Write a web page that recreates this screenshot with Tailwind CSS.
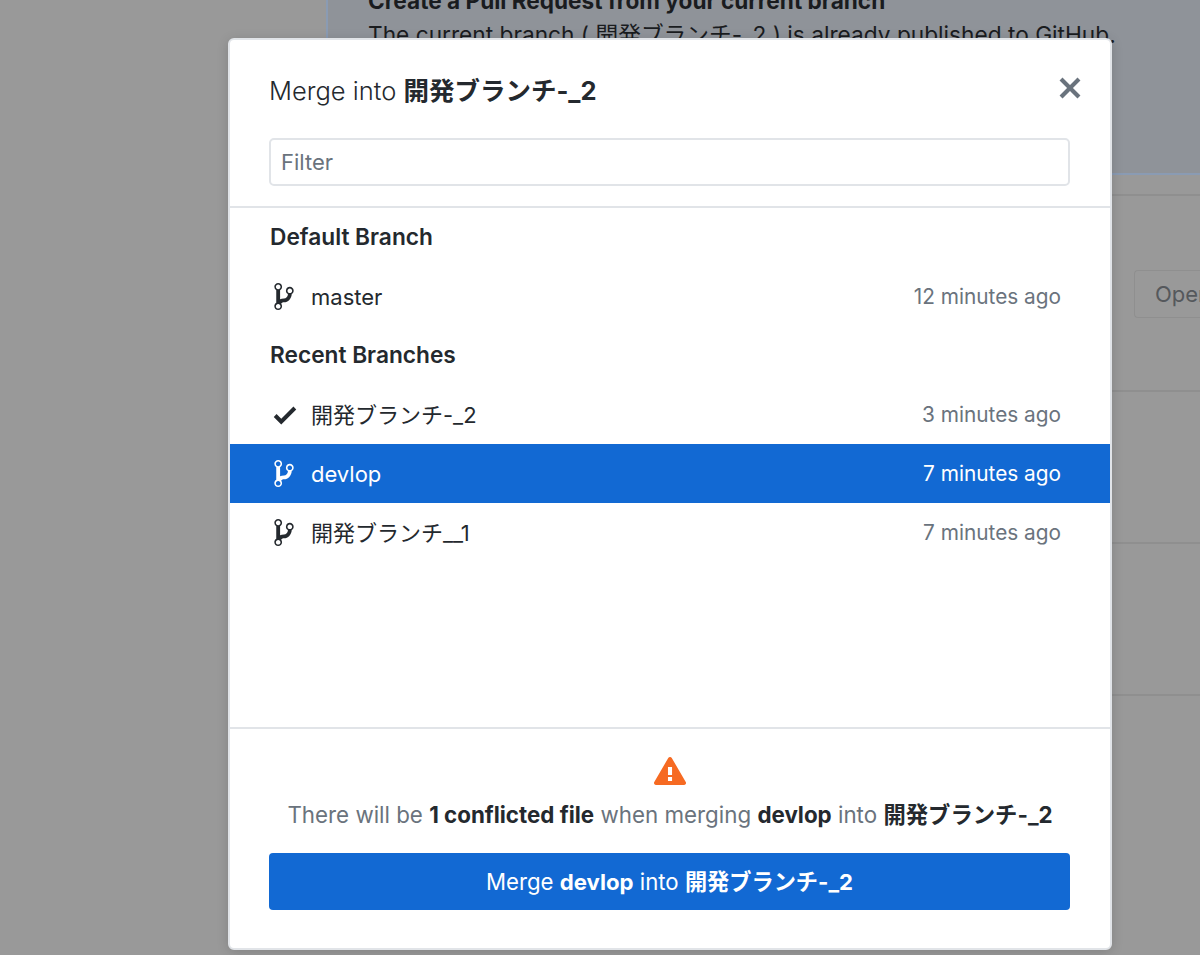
<!DOCTYPE html>
<html lang="en">
<head>
    <meta charset="utf-8">
    <title>Merge into branch</title>
    <script src="https://cdn.jsdelivr.net/npm/@tailwindcss/browser@4"></script>
</head>
<body class="h-[955px] overflow-hidden bg-[#999999] text-[#24292e] font-['Inter','Noto_Sans_CJK_JP',sans-serif]">
    <!-- page behind the dialog -->
    <main class="ml-[326px] h-full">
        <section class="h-[175px] pl-[40px] bg-[#8f9399] border-l-2 border-b-2 border-[#8a9bb3] overflow-hidden text-[22.7px] leading-[34px] text-[#1a1c1f]">
            <p class="mt-[-16px] text-[22.6px] font-bold whitespace-nowrap">Create a Pull Request from your current branch</p>
            <p class="whitespace-nowrap">The current branch ( 開発ブランチ-_2 ) is already published to GitHub.</p>
        </section>
        <div class="h-[196px] mt-[19px] border-t-2 border-[#8f8f8f] flex items-center justify-end">
            <div class="w-[66px] h-[48px] mt-[2px] pl-[20px] border border-r-0 border-[#8f8f8f] rounded-l-[4px] text-[22px] leading-[46px] text-[#55585c] overflow-hidden">Open</div>
        </div>
        <div class="h-[152px] border-t-2 border-[#8f8f8f]"></div>
        <div class="h-[152px] border-t-2 border-[#8f8f8f]"></div>
        <div class="border-t-2 border-[#8f8f8f]"></div>
    </main>

    <!-- dialog -->
    <div class="absolute left-[228px] top-[38px] w-[884px] h-[912px] flex flex-col bg-white rounded-[6px] border-2 border-[#e1e4e8] shadow-[0_2px_12px_rgba(0,0,0,0.15)]">
        <header class="h-[168px] px-[39px] border-b-2 border-[#e1e4e8]">
            <div class="h-[98px] flex items-start justify-between">
                <h1 class="mt-[33px] text-[25.5px] leading-[36px] font-light">Merge into <strong class="font-bold">開発ブランチ-_2</strong></h1>
                <svg class="mt-[32px] mr-[-11px] w-[24px] h-[32px] fill-[#6a737d]" viewBox="0 0 12 16"><path d="M7.48 8l3.75 3.75-1.48 1.48L6 9.48l-3.75 3.75-1.48-1.48L4.52 8 .77 4.25l1.48-1.48L6 6.52l3.75-3.75 1.48 1.48L7.48 8z"/></svg>
            </div>
            <input class="block w-[801px] h-[48px] px-[10px] border-2 border-[#e1e4e8] rounded-[5px] text-[22px] placeholder:text-[#6a737d] outline-none" placeholder="Filter">
        </header>

        <div class="flex-1 text-[22px]">
            <h2 class="h-[59px] px-[40px] flex items-center text-[22.7px] font-semibold">Default Branch</h2>
            <div class="h-[59px] px-[40px] flex items-center justify-between">
                <span class="flex items-center">
                    <svg class="ml-[4px] w-[20px] h-[31px] fill-current" viewBox="0 0 10 16"><path d="M10 5c0-1.11-.89-2-2-2a1.993 1.993 0 0 0-1 3.72v.3c-.02.52-.23.98-.63 1.38-.4.4-.86.61-1.38.63-.83.02-1.48.16-2 .45V4.72a1.993 1.993 0 0 0-1-3.72C.88 1 0 1.89 0 3a2 2 0 0 0 1 1.72v6.56c-.59.35-1 .99-1 1.72 0 1.11.89 2 2 2 1.11 0 2-.89 2-2 0-.53-.2-1-.53-1.36.09-.06.48-.41.59-.47.25-.11.56-.17.94-.17 1.05-.05 1.95-.45 2.75-1.25S8.95 7.77 9 6.73h-.02C9.59 6.37 10 5.73 10 5zM2 1.8c.66 0 1.2.55 1.2 1.2 0 .65-.55 1.2-1.2 1.2C1.35 4.2.8 3.65.8 3c0-.65.55-1.2 1.2-1.2zm0 12.41c-.66 0-1.2-.55-1.2-1.2 0-.65.55-1.2 1.2-1.2.65 0 1.2.55 1.2 1.2 0 .65-.55 1.2-1.2 1.2zm6-8c-.66 0-1.2-.55-1.2-1.2 0-.65.55-1.2 1.2-1.2.65 0 1.2.55 1.2 1.2 0 .65-.55 1.2-1.2 1.2z"/></svg>
                    <span class="ml-[17px] mt-[1px]">master</span>
                </span>
                <span class="mr-[9px] mt-[1px] text-[20.8px] text-[#6a737d]">12 minutes ago</span>
            </div>
            <h2 class="h-[59px] px-[40px] flex items-center text-[22.7px] font-semibold">Recent Branches</h2>
            <div class="h-[59px] px-[40px] flex items-center justify-between">
                <span class="flex items-center">
                    <svg class="ml-[3px] w-[24px] h-[30px] fill-current" viewBox="0 0 12 16"><path d="M12 5l-8 8-4-4 1.5-1.5L4 10l6.5-6.5L12 5z"/></svg>
                    <span class="ml-[14px] mt-[1px]">開発ブランチ-_2</span>
                </span>
                <span class="mr-[9px] mt-[1px] text-[20.8px] text-[#6a737d]">3 minutes ago</span>
            </div>
            <div class="h-[59px] px-[40px] flex items-center justify-between bg-[#1269d3] text-white">
                <span class="flex items-center">
                    <svg class="ml-[4px] w-[20px] h-[31px] fill-current" viewBox="0 0 10 16"><path d="M10 5c0-1.11-.89-2-2-2a1.993 1.993 0 0 0-1 3.72v.3c-.02.52-.23.98-.63 1.38-.4.4-.86.61-1.38.63-.83.02-1.48.16-2 .45V4.72a1.993 1.993 0 0 0-1-3.72C.88 1 0 1.89 0 3a2 2 0 0 0 1 1.72v6.56c-.59.35-1 .99-1 1.72 0 1.11.89 2 2 2 1.11 0 2-.89 2-2 0-.53-.2-1-.53-1.36.09-.06.48-.41.59-.47.25-.11.56-.17.94-.17 1.05-.05 1.95-.45 2.75-1.25S8.95 7.77 9 6.73h-.02C9.59 6.37 10 5.73 10 5zM2 1.8c.66 0 1.2.55 1.2 1.2 0 .65-.55 1.2-1.2 1.2C1.35 4.2.8 3.65.8 3c0-.65.55-1.2 1.2-1.2zm0 12.41c-.66 0-1.2-.55-1.2-1.2 0-.65.55-1.2 1.2-1.2.65 0 1.2.55 1.2 1.2 0 .65-.55 1.2-1.2 1.2zm6-8c-.66 0-1.2-.55-1.2-1.2 0-.65.55-1.2 1.2-1.2.65 0 1.2.55 1.2 1.2 0 .65-.55 1.2-1.2 1.2z"/></svg>
                    <span class="ml-[17px] mt-[1px]">devlop</span>
                </span>
                <span class="mr-[9px] mt-[1px] text-[20.8px]">7 minutes ago</span>
            </div>
            <div class="h-[59px] px-[40px] flex items-center justify-between">
                <span class="flex items-center">
                    <svg class="ml-[4px] w-[20px] h-[31px] fill-current" viewBox="0 0 10 16"><path d="M10 5c0-1.11-.89-2-2-2a1.993 1.993 0 0 0-1 3.72v.3c-.02.52-.23.98-.63 1.38-.4.4-.86.61-1.38.63-.83.02-1.48.16-2 .45V4.72a1.993 1.993 0 0 0-1-3.72C.88 1 0 1.89 0 3a2 2 0 0 0 1 1.72v6.56c-.59.35-1 .99-1 1.72 0 1.11.89 2 2 2 1.11 0 2-.89 2-2 0-.53-.2-1-.53-1.36.09-.06.48-.41.59-.47.25-.11.56-.17.94-.17 1.05-.05 1.95-.45 2.75-1.25S8.95 7.77 9 6.73h-.02C9.59 6.37 10 5.73 10 5zM2 1.8c.66 0 1.2.55 1.2 1.2 0 .65-.55 1.2-1.2 1.2C1.35 4.2.8 3.65.8 3c0-.65.55-1.2 1.2-1.2zm0 12.41c-.66 0-1.2-.55-1.2-1.2 0-.65.55-1.2 1.2-1.2.65 0 1.2.55 1.2 1.2 0 .65-.55 1.2-1.2 1.2zm6-8c-.66 0-1.2-.55-1.2-1.2 0-.65.55-1.2 1.2-1.2.65 0 1.2.55 1.2 1.2 0 .65-.55 1.2-1.2 1.2z"/></svg>
                    <span class="ml-[17px] mt-[1px]">開発ブランチ__1</span>
                </span>
                <span class="mr-[9px] mt-[1px] text-[20.8px] text-[#6a737d]">7 minutes ago</span>
            </div>
        </div>

        <footer class="h-[221px] px-[39px] pt-[26px] border-t-2 border-[#e1e4e8] flex flex-col items-center">
            <svg class="w-[32px] h-[32px] fill-[#f66a22]" viewBox="0 0 16 16"><path d="M8.893 1.5c-.183-.31-.52-.5-.887-.5s-.703.19-.886.5L.138 13.499a.98.98 0 0 0 0 1.001c.193.31.53.501.886.501h13.964c.367 0 .704-.19.877-.5a1.03 1.03 0 0 0 .01-1.002L8.893 1.5zm.133 11.497H6.987v-2.003h2.039v2.003zm0-3.004H6.987V5.987h2.039v4.006z"/></svg>
            <p class="mt-[11px] text-[22.35px] leading-[34px] text-[#6a737d] whitespace-nowrap">There will be <strong class="font-bold text-[#24292e]">1 conflicted file</strong> when merging <strong class="font-bold text-[#24292e]">devlop</strong> into <strong class="font-bold text-[#24292e]">開発ブランチ-_2</strong></p>
            <button class="mt-[21px] self-start w-[801px] h-[57px] shrink-0 bg-[#1269d3] rounded-[4px] text-white text-[22.2px]">Merge <strong class="font-bold">devlop</strong> into <strong class="font-bold">開発ブランチ-_2</strong></button>
        </footer>
    </div>
</body>
</html>
